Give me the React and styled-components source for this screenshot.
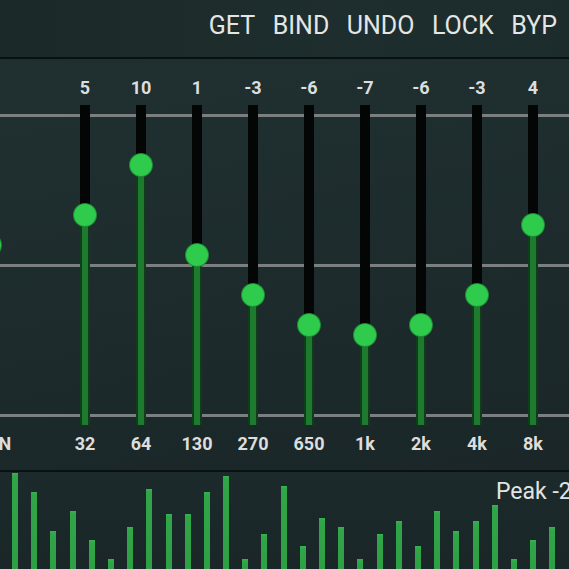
import styled, { createGlobalStyle } from "styled-components";

const GlobalStyle = createGlobalStyle`
  html, body {
    margin: 0;
    padding: 0;
    background: #1b2828;
    overflow: hidden;
  }
  body {
    font-family: Roboto, "Noto Sans", "Liberation Sans", sans-serif;
  }
`;

const Screen = styled.div`
  width: 569px;
  height: 569px;
  overflow: hidden;
  display: flex;
  flex-direction: column;
  background: #1b2828;
`;

const Header = styled.header`
  height: 59px;
  flex-shrink: 0;
  display: flex;
  justify-content: flex-end;
  align-items: flex-start;
  gap: 17.5px;
  padding: 11px 12px 0 0;
  box-sizing: border-box;
  background: linear-gradient(90deg, #1c2929, #1e2d2d 60%, #1c2b2b);
  border-bottom: 2px solid #0a1111;
`;

const Action = styled.span`
  font-size: 25px;
  line-height: 29px;
  color: #e4e6e6;
`;

const EqPanel = styled.section`
  height: 411px;
  flex-shrink: 0;
  overflow: hidden;
  border-bottom: 2px solid #0a1111;
  background:
    linear-gradient(#7b7f80, #7b7f80) 0 55px / 100% 3px no-repeat,
    linear-gradient(#7b7f80, #7b7f80) 0 205px / 100% 3px no-repeat,
    linear-gradient(#7b7f80, #7b7f80) 0 355px / 100% 3px no-repeat,
    linear-gradient(170deg, #203031 0%, #1d2b2c 55%, #1a2627 100%);
`;

const BandRow = styled.div`
  display: flex;
  margin-left: -38px;
`;

const Band = styled.div`
  width: 56px;
  flex-shrink: 0;
  display: flex;
  flex-direction: column;
  align-items: center;
  margin-right: ${(p) => (p.$preamp ? "39px" : "0")};
`;

const Label = styled.div`
  height: 24px;
  line-height: 24px;
  font-size: 18px;
  font-weight: 700;
  color: #dcdede;
  white-space: nowrap;
`;

const GainLabel = styled(Label)`
  margin: 17px 0 5px;
`;

const FreqLabel = styled(Label)`
  margin-top: 7px;
`;

const Track = styled.div`
  position: relative;
  width: 10px;
  height: 320px;
  display: flex;
  flex-direction: column;
`;

const TrackTop = styled.div`
  flex: 1;
  background: #040606;
`;

const TrackFill = styled.div`
  height: ${(p) => p.$h}px;
  background: #1e7a2f;
  box-shadow: inset 2px 0 0 #0f3d19, inset -2px 0 0 #0f3d19;
`;

const Knob = styled.div`
  position: absolute;
  left: 50%;
  top: ${(p) => p.$y}px;
  width: 22px;
  height: 22px;
  margin: -11px 0 0 -11px;
  border-radius: 50%;
  background: #2fcb4d;
  box-shadow: 0 0 0 1px #1f8a35;
`;

const Spectrum = styled.section`
  position: relative;
  flex: 1;
  display: flex;
  align-items: flex-end;
  gap: 13.2px;
  padding-left: 12px;
  background: linear-gradient(180deg, #1c2a2b, #1a2627);
`;

const Bar = styled.div`
  width: 6px;
  flex-shrink: 0;
  height: ${(p) => p.$h}px;
  background: linear-gradient(180deg, #38b252 0, #30a648 3px, #2e9f45 100%);
`;

const Peak = styled.div`
  position: absolute;
  top: 6px;
  left: 496px;
  font-size: 23px;
  line-height: 28px;
  color: #e2e4e4;
  white-space: nowrap;
`;

const bands = [
  { freq: "32", gain: 5 },
  { freq: "64", gain: 10 },
  { freq: "130", gain: 1 },
  { freq: "270", gain: -3 },
  { freq: "650", gain: -6 },
  { freq: "1k", gain: -7 },
  { freq: "2k", gain: -6 },
  { freq: "4k", gain: -3 },
  { freq: "8k", gain: 4 },
];

const barTops = [
  473, 492, 531, 511, 540, 559, 527, 489, 514, 514, 492, 476, 559, 534, 486,
  546, 518, 527, 559, 534, 521, 546, 511, 531, 521, 505, 559, 540, 527,
];

const Slider = ({ gain }) => {
  const knobY = 160 - gain * 10;
  return (
    <Track>
      <TrackTop />
      <TrackFill $h={320 - knobY} />
      <Knob $y={knobY} />
    </Track>
  );
};

const App = () => {
  return (
    <>
      <GlobalStyle />
      <Screen>
        <Header>
          <Action>GET</Action>
          <Action>BIND</Action>
          <Action>UNDO</Action>
          <Action>LOCK</Action>
          <Action>BYP</Action>
        </Header>
        <EqPanel>
          <BandRow>
            <Band $preamp>
              <GainLabel>2</GainLabel>
              <Slider gain={2} />
              <FreqLabel>GAIN</FreqLabel>
            </Band>
            {bands.map((b) => (
              <Band key={b.freq}>
                <GainLabel>{b.gain}</GainLabel>
                <Slider gain={b.gain} />
                <FreqLabel>{b.freq}</FreqLabel>
              </Band>
            ))}
          </BandRow>
        </EqPanel>
        <Spectrum>
          {barTops.map((t, i) => (
            <Bar key={i} $h={569 - t} />
          ))}
          <Peak>Peak -2.4 dB</Peak>
        </Spectrum>
      </Screen>
    </>
  );
};

export default App;
